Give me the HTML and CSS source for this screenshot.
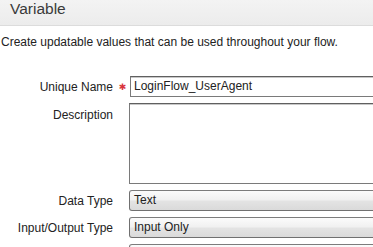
FILE: index.html
```html
<!DOCTYPE html>
<html>
<head>
<meta charset="utf-8">
<link rel="stylesheet" href="styles.css">
</head>
<body>
<div class="page">
  <div class="header">Variable</div>
  <p class="intro">Create updatable values that can be used throughout your flow.</p>
  <div class="form">
    <div class="label">Unique Name</div>
    <div class="req">✱</div>
    <div class="field text-input">LoginFlow_UserAgent</div>

    <div class="label top">Description</div>
    <div class="req"></div>
    <div class="field textarea"></div>

    <div class="label">Data Type</div>
    <div class="req"></div>
    <div class="field select">Text</div>

    <div class="label">Input/Output Type</div>
    <div class="req"></div>
    <div class="field select">Input Only</div>

    <div class="label"></div>
    <div class="req"></div>
    <div class="field select"></div>
  </div>
</div>
</body>
</html>
```

FILE: styles.css
```css
html, body {
  margin: 0;
  padding: 0;
  background: #fff;
  overflow: hidden;
}
.page {
  width: 373px;
  height: 247px;
  overflow: hidden;
  font-family: "Liberation Sans", Arial, sans-serif;
  font-size: 12px;
  color: #222;
}
.header {
  height: 25px;
  line-height: 18px;
  padding-left: 10px;
  font-size: 15.5px;
  color: #3a3a3a;
  background: linear-gradient(#f3f3f3, #ececec);
  border-bottom: 1px solid #dcdcdc;
}
.intro {
  margin: 9px 0 0 1px;
  line-height: 14px;
  white-space: nowrap;
}
.form {
  margin-top: 27px;
  display: grid;
  grid-template-columns: 113px 16px 270px;
  row-gap: 6px;
}
.label {
  text-align: right;
  line-height: 14px;
  align-self: center;
  white-space: nowrap;
}
.label.top {
  align-self: start;
  padding-top: 5px;
}
.req {
  color: #d8343c;
  font-family: "DejaVu Sans", sans-serif;
  font-size: 9px;
  line-height: 10px;
  text-align: center;
  align-self: center;
  padding-left: 3px;
}
.field {
  box-sizing: border-box;
  line-height: 19px;
  white-space: nowrap;
}
.text-input {
  height: 21px;
  margin-left: 1px;
  padding-left: 3px;
  border: 1px solid #7a7a7a;
  border-top-color: #5f5f5f;
  box-shadow: inset 0 1px 0 #c8c8c8;
}
.textarea {
  height: 81px;
  border: 1px solid #7a7a7a;
  border-top-color: #5f5f5f;
  box-shadow: inset 0 1px 0 #c8c8c8;
}
.select {
  height: 21px;
  padding-left: 4px;
  border: 1px solid #707070;
  border-top-color: #7c7c7c;
  border-radius: 3px 0 0 3px;
  background: linear-gradient(#fbfbfb 0%, #f1f1f1 45%, #e3e3e3 55%, #dadada 100%);
}
```
